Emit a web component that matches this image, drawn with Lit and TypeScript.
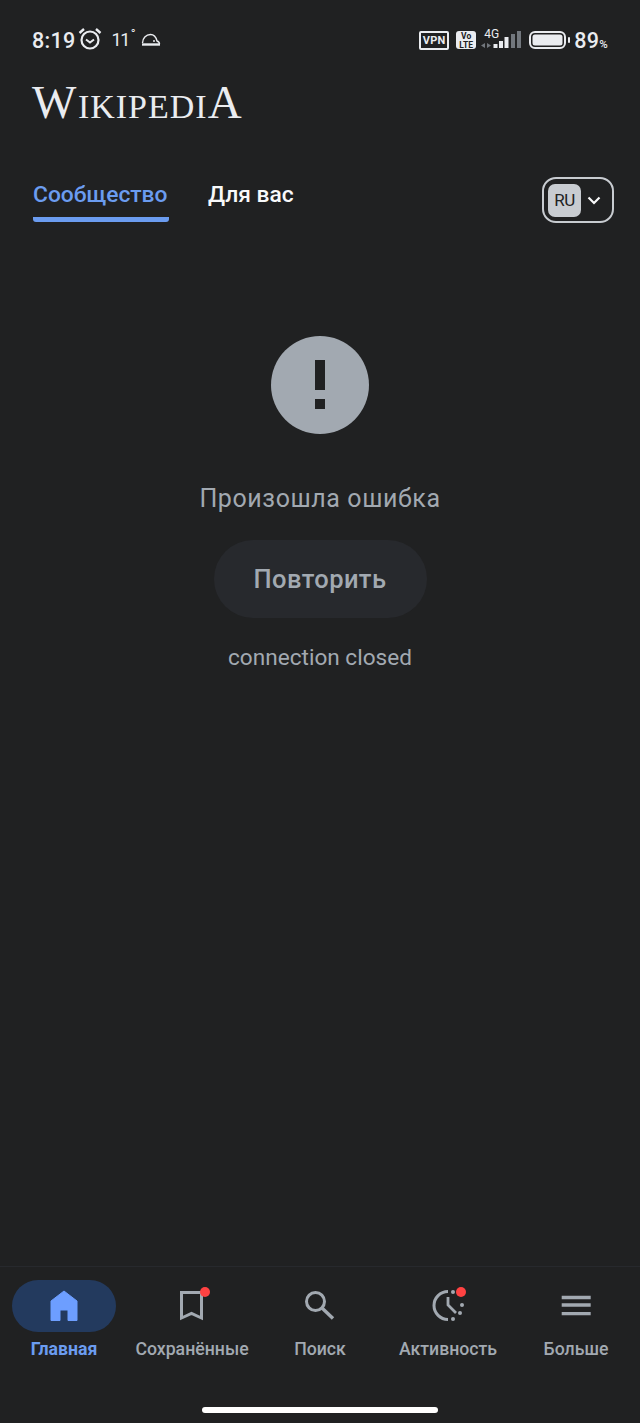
import { LitElement, html, css, svg } from "lit";
import { customElement } from "lit/decorators.js";

const navIcons = {
  home: svg`<path d="M18 3 L5 13 V32.5 H14 V22 H22 V32.5 H31 V13 Z" fill="#6d9eff" stroke="#6d9eff" stroke-linejoin="round"/>`,
  saved: svg`<path d="M7.5 4.5 H27.5 V30 L17.5 25.5 L7.5 30 Z" fill="none" stroke="#a2a9b1" stroke-width="3"/>`,
  search: svg`<circle cx="13.5" cy="13.5" r="9" fill="none" stroke="#a2a9b1" stroke-width="3"/><path d="M20 20 L31 30.5" stroke="#a2a9b1" stroke-width="3.4"/>`,
  activity: svg`<path d="M18 3.5 A14 14 0 0 0 18 31.5" fill="none" stroke="#a2a9b1" stroke-width="3"/>
    <path d="M18 9 V17 L26 25" fill="none" stroke="#a2a9b1" stroke-width="2.8"/>
    <circle cx="23" cy="4" r="2" fill="#a2a9b1"/><circle cx="32" cy="17" r="2" fill="#a2a9b1"/>
    <circle cx="30" cy="25" r="2" fill="#a2a9b1"/><circle cx="23" cy="31" r="2" fill="#a2a9b1"/>`,
  more: svg`<path d="M3.7 9.5 H32.7 M3.7 17 H32.7 M3.7 25.7 H32.7" stroke="#a2a9b1" stroke-width="3.3"/>`,
};

const navItems = [
  { icon: navIcons.home, label: "Главная", active: true, dot: false },
  { icon: navIcons.saved, label: "Сохранённые", active: false, dot: true },
  { icon: navIcons.search, label: "Поиск", active: false, dot: false },
  { icon: navIcons.activity, label: "Активность", active: false, dot: true },
  { icon: navIcons.more, label: "Больше", active: false, dot: false },
];

@customElement("app-root")
export class AppRoot extends LitElement {
  static styles = css`
    :host {
      display: flex;
      flex-direction: column;
      height: 1423px;
      background: #202122;
      font-family: Roboto, "Noto Sans", sans-serif;
      color: #a2a9b1;
      overflow: hidden;
    }

    svg {
      display: block;
    }

    .status {
      height: 80px;
      padding: 0 32px;
      display: flex;
      align-items: center;
      justify-content: space-between;
      color: #eaecf0;
    }

    .status-left,
    .status-right {
      display: flex;
      align-items: center;
    }

    .time {
      font-size: 21.5px;
      font-weight: 500;
      letter-spacing: 0.3px;
    }

    .alarm {
      margin-left: 2px;
      margin-top: -2px;
    }

    .temp {
      margin-left: 10px;
      font-size: 18px;
      font-weight: 400;
      letter-spacing: -1.5px;
      display: flex;
      margin-top: -2px;
    }

    .temp sup {
      font-size: 13px;
      line-height: 1;
      margin: -2px 0 0 2px;
      letter-spacing: 0;
    }

    .cloud {
      margin-left: 5px;
    }

    .vpn {
      width: 30px;
      height: 19px;
      box-sizing: border-box;
      border: 2px solid #eaecf0;
      border-radius: 2px;
      font-size: 11px;
      font-weight: 700;
      line-height: 15px;
      text-align: center;
      letter-spacing: 0.2px;
    }

    .volte {
      margin-left: 7px;
      width: 20px;
      height: 18px;
      border-radius: 3px;
      background: #eaecf0;
      color: #202122;
      font-size: 8.5px;
      font-weight: 700;
      line-height: 8.5px;
      text-align: center;
      padding-top: 1px;
      box-sizing: border-box;
    }

    .net {
      margin-left: 5px;
      position: relative;
      width: 40px;
      height: 20px;
    }

    .net span {
      position: absolute;
      left: 3px;
      top: -2px;
      font-size: 12px;
      line-height: 12px;
    }

    .battery {
      margin-left: 8px;
    }

    .level {
      margin-left: 3px;
      font-size: 21.5px;
      font-weight: 500;
      letter-spacing: 0.3px;
      display: flex;
      align-items: baseline;
    }

    .level small {
      font-size: 11.5px;
      font-weight: 500;
    }

    .wordmark {
      margin: 0;
      padding-left: 32px;
      height: 50px;
      font-family: "Liberation Serif", serif;
      font-weight: 400;
      font-size: 34px;
      line-height: 44px;
      letter-spacing: 1px;
      color: #eaecf0;
    }

    .wordmark b {
      font-weight: 400;
      font-size: 47px;
      letter-spacing: 1.5px;
    }

    .tabs-row {
      margin-top: 46px;
      padding: 0 26px 0 33px;
      display: flex;
      justify-content: space-between;
      align-items: flex-start;
    }

    .tabs {
      display: flex;
      gap: 39px;
    }

    .tab {
      height: 46px;
      box-sizing: border-box;
      padding-top: 5px;
      font-size: 22.8px;
      line-height: 28px;
      font-weight: 500;
      color: #f8f9fa;
    }

    .tab.active {
      color: #6b9cf0;
      border-bottom: 5px solid #6b9cf0;
      border-radius: 3px;
      width: 136px;
    }

    .lang {
      width: 72px;
      height: 46px;
      margin-top: 1px;
      box-sizing: border-box;
      border: 2px solid #c8ccd1;
      border-radius: 14px;
      padding-left: 4px;
      display: flex;
      align-items: center;
      gap: 5px;
    }

    .chip {
      width: 33px;
      height: 33px;
      border-radius: 7px;
      background: #c8ccd1;
      color: #202122;
      font-size: 17px;
      line-height: 33px;
      letter-spacing: -0.4px;
      text-align: center;
    }

    .error {
      flex: 1;
      padding-top: 113px;
      display: flex;
      flex-direction: column;
      align-items: center;
    }

    .title {
      margin-top: 49px;
      font-size: 25px;
      line-height: 32px;
      letter-spacing: 0.6px;
    }

    .retry {
      margin-top: 25px;
      width: 213px;
      height: 78px;
      border-radius: 39px;
      background: #27292d;
      color: #a2a9b1;
      font-size: 25.5px;
      font-weight: 500;
      line-height: 78px;
      text-align: center;
      letter-spacing: 0.4px;
    }

    .detail {
      margin-top: 26px;
      font-size: 22.6px;
      line-height: 28px;
    }

    nav {
      box-sizing: border-box;
      border-top: 1px solid #27292d;
      padding-top: 13px;
      height: 141px;
      display: grid;
      grid-template-columns: repeat(5, 1fr);
    }

    .item {
      display: flex;
      flex-direction: column;
      align-items: center;
      font-size: 17.7px;
      font-weight: 500;
      line-height: 20px;
    }

    .item.active {
      color: #6b9cf0;
      font-weight: 700;
    }

    .icon {
      width: 104px;
      height: 52px;
      border-radius: 26px;
      display: flex;
      align-items: center;
      justify-content: center;
      margin-bottom: 7px;
      position: relative;
    }

    .item.active .icon {
      background: #233a5e;
    }

    .dot {
      position: absolute;
      left: 60px;
      top: 7px;
      width: 10px;
      height: 10px;
      border-radius: 50%;
      background: #ff4242;
    }

    .gesture {
      flex: none;
      height: 6px;
      width: 236px;
      margin: 0 auto 10px;
      border-radius: 3px;
      background: #fff;
    }
  `;

  private renderStatus() {
    return html`
      <div class="status">
        <div class="status-left">
          <span class="time">8:19</span>
          <svg class="alarm" width="24" height="24" viewBox="0 0 24 24" fill="none" stroke="#eaecf0">
            <circle cx="12" cy="13" r="8.5" stroke-width="2.2"/>
            <path d="M8 12.5 L12 15.5 L16 12.5" stroke-width="2"/>
            <path d="M1.5 6 L6 2 M22.5 6 L18 2" stroke-width="2.4"/>
          </svg>
          <span class="temp">11<sup>°</sup></span>
          <svg class="cloud" width="20" height="14" viewBox="0 0 20 14" fill="none" stroke="#eaecf0" stroke-width="1.4">
            <path d="M1.5 10 C1.5 5.5 5 1.5 9.5 1.5 C13 1.5 15 4 16 8 C17.5 8.5 18.5 9.5 18.5 11"/>
            <path d="M1 11.5 H19" stroke-width="2.4"/>
            <circle cx="13" cy="8" r="1" fill="#eaecf0" stroke="none"/>
          </svg>
        </div>
        <div class="status-right">
          <div class="vpn">VPN</div>
          <div class="volte">Vo<br />LTE</div>
          <div class="net">
            <span>4G</span>
            <svg width="40" height="20" viewBox="0 0 40 20">
              <path d="M0 15.5 L4 13 V18 Z M10 15.5 L6 13 V18 Z" fill="#72777d"/>
              <path d="M12.5 14 h4 v4 h-4 Z M18 11 h4 v7 h-4 Z M23.5 7 h4 v11 h-4 Z" fill="#eaecf0"/>
              <path d="M30 4 h4 v14 h-4 Z M36 1 h4 v17 h-4 Z" fill="#72777d"/>
            </svg>
          </div>
          <svg class="battery" width="42" height="18" viewBox="0 0 42 18">
            <rect x="1" y="1" width="35" height="16" rx="5" fill="none" stroke="#eaecf0" stroke-width="2"/>
            <rect x="3.5" y="3.5" width="30" height="11" rx="2.5" fill="#eaecf0"/>
            <rect x="39" y="6" width="2" height="6" rx="1" fill="#eaecf0"/>
          </svg>
          <span class="level">89<small>%</small></span>
        </div>
      </div>
    `;
  }

  render() {
    return html`
      ${this.renderStatus()}
      <h1 class="wordmark"><b>W</b>IKIPEDI<b>A</b></h1>

      <div class="tabs-row">
        <div class="tabs">
          <div class="tab active">Сообщество</div>
          <div class="tab">Для вас</div>
        </div>
        <div class="lang">
          <div class="chip">RU</div>
          <svg width="16" height="16" viewBox="0 0 16 16" fill="none" stroke="#f8f9fa" stroke-width="2.2">
            <path d="M2.5 5.5 L8 11 L13.5 5.5"/>
          </svg>
        </div>
      </div>

      <main class="error">
        <svg width="98" height="98" viewBox="0 0 98 98">
          <circle cx="49" cy="49" r="49" fill="#a2a9b1"/>
          <path d="M44 24 H54 V54 H44 Z M44 63 H54 V73 H44 Z" fill="#202122"/>
        </svg>
        <div class="title">Произошла ошибка</div>
        <div class="retry">Повторить</div>
        <div class="detail">connection closed</div>
      </main>

      <nav>
        ${navItems.map(
          (item) => html`
            <div class="item ${item.active ? "active" : ""}">
              <div class="icon">
                <svg width="36" height="36" viewBox="0 0 36 36">${item.icon}</svg>
                ${item.dot ? html`<span class="dot"></span>` : ""}
              </div>
              ${item.label}
            </div>
          `
        )}
      </nav>
      <div class="gesture"></div>
    `;
  }
}
